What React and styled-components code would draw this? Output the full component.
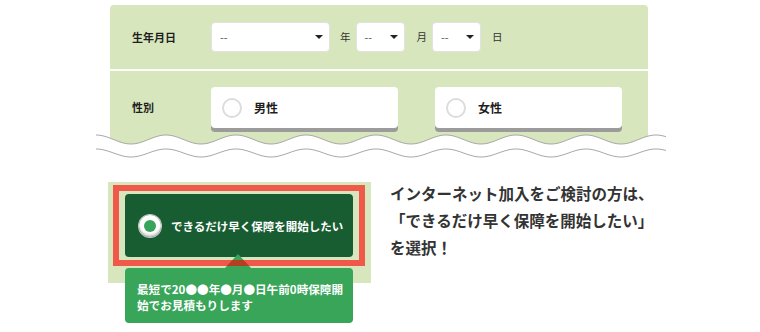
import React from "react";
import styled, { createGlobalStyle } from "styled-components";

const Global = createGlobalStyle`
  html, body { margin: 0; padding: 0; background: #fff; }
  body { font-family: "Noto Sans CJK JP", "Noto Sans", sans-serif; color: #222; }
  * { box-sizing: border-box; }
`;

const Page = styled.div`
  width: 760px;
  height: 332px;
  padding-top: 5px;
  overflow: hidden;
`;

const Panel = styled.div`
  margin-left: 110px;
  width: 538px;
  background: #d8e6bd;
  border-radius: 4px 4px 0 0;
`;

const Row = styled.div`
  display: flex;
  align-items: ${(p) => (p.$top ? "flex-start" : "center")};
  height: ${(p) => p.$h}px;
  padding-top: ${(p) => p.$pt || 0}px;
  border-bottom: ${(p) => (p.$sep ? "2px solid #fff" : "none")};
`;

const Label = styled.div`
  width: 101px;
  padding-left: 22px;
  font-size: 11px;
  font-weight: 700;
  line-height: 1;
  color: #1e1e1e;
  ${(p) => p.$top && "margin-top: 15px;"}
`;

const Group = styled.div`
  display: flex;
  align-items: center;
`;

const Select = styled.div`
  position: relative;
  width: ${(p) => p.$w}px;
  height: 30px;
  background: #fff;
  border: 1px solid #e2e2e2;
  border-radius: 4px;
  display: flex;
  align-items: center;
  padding-left: 8px;
  font-size: 11px;
  color: #555;
  &::after {
    content: "";
    position: absolute;
    right: 6px;
    top: 12px;
    border-left: 4px solid transparent;
    border-right: 4px solid transparent;
    border-top: 4px solid #222;
  }
`;

const Unit = styled.span`
  font-size: 10.5px;
  color: #333;
  margin: 0 ${(p) => p.$r}px 0 ${(p) => p.$l}px;
  line-height: 1;
`;

const Cards = styled.div`
  display: flex;
  gap: 37px;
`;

const Card = styled.div`
  width: 187px;
  height: 41px;
  background: #fff;
  border-radius: 4px;
  box-shadow: 0 4px 0 #9b9b9b;
  display: flex;
  align-items: center;
  padding-left: ${(p) => p.$pl}px;
  gap: 12px;
  font-size: 12px;
  font-weight: 700;
  color: #1e1e1e;
`;

const Circle = styled.span`
  width: 20px;
  height: 20px;
  border-radius: 50%;
  border: 2px solid #dcdcdc;
  background: #fff;
`;

const WaveSvg = styled.svg`
  display: block;
  margin: -15px 0 0 96px;
`;

const Lower = styled.div`
  display: flex;
  align-items: flex-start;
  margin: 21px 0 0 108px;
`;

const Box = styled.div`
  position: relative;
  width: 263px;
  height: 101px;
  background: #d8e6bd;
  padding: 12px 18px 26px 17px;
`;

const ChoiceButton = styled.div`
  width: 228px;
  height: 63px;
  background: #185d31;
  border-radius: 4px;
  display: flex;
  align-items: center;
  padding-left: 14px;
  gap: 10px;
  color: #fff;
  font-size: 11.5px;
  font-weight: 700;
  white-space: nowrap;
`;

const Radio = styled.span`
  width: 22px;
  height: 22px;
  border-radius: 50%;
  background: radial-gradient(circle at 50% 35%, #ffffff 55%, #d6d6d6 100%);
  box-shadow: inset 0 -2px 2px rgba(0, 0, 0, 0.15), 0 0 0 1px #c9c9c9;
  display: flex;
  align-items: center;
  justify-content: center;
  &::after {
    content: "";
    width: 12px;
    height: 12px;
    border-radius: 50%;
    background: #38a35a;
  }
`;

const Frame = styled.div`
  position: absolute;
  top: 3px;
  left: 5px;
  right: 6px;
  bottom: 17px;
  border: 6px solid rgba(255, 0, 2, 0.62);
  z-index: 3;
  pointer-events: none;
`;

const Tooltip = styled.div`
  position: absolute;
  top: 86px;
  left: 17px;
  width: 228px;
  height: 55px;
  background: #38a559;
  border-radius: 4px;
  padding: 13px 8px 0 12px;
  color: #fff;
  font-size: 11.6px;
  font-weight: 700;
  line-height: 16px;
  z-index: 2;
  white-space: nowrap;
  &::before {
    content: "";
    position: absolute;
    top: -14px;
    left: 100px;
    border-left: 13px solid transparent;
    border-right: 13px solid transparent;
    border-bottom: 14px solid #38a559;
  }
`;

const Note = styled.p`
  margin: -2px 0 0 19px;
  font-size: 15.5px;
  font-weight: 700;
  line-height: 27px;
  color: #333;
  white-space: nowrap;
`;

function wave(mid, amp, period, width) {
  let d = "";
  for (let x = 0; x <= width; x += 2) {
    const y = mid - amp * Math.cos((2 * Math.PI * x) / period);
    d += (x === 0 ? "M" : "L") + x + " " + y.toFixed(2) + " ";
  }
  return d;
}

function Wave() {
  const W = 570;
  const top = wave(8.5, 4.5, 70, W);
  const bottom = wave(22, 4, 70, W);
  return (
    <WaveSvg width={W} height="30" viewBox={`0 0 ${W} 30`}>
      <path d={`${top} L${W} 30 L0 30 Z`} fill="#fff" />
      <path d={top} fill="none" stroke="#a9a9a9" strokeWidth="1" />
      <path d={bottom} fill="none" stroke="#a9a9a9" strokeWidth="1" />
    </WaveSvg>
  );
}

export default function App() {
  return (
    <Page>
      <Global />
      <Panel>
        <Row $h={66} $sep>
          <Label>生年月日</Label>
          <Group>
            <Select $w={119}>--</Select>
            <Unit $l={10} $r={5}>年</Unit>
            <Select $w={49}>--</Select>
            <Unit $l={12} $r={5}>月</Unit>
            <Select $w={49}>--</Select>
            <Unit $l={11} $r={0}>日</Unit>
          </Group>
        </Row>
        <Row $h={75} $pt={16} $top>
          <Label $top>性別</Label>
          <Cards>
            <Card $pl={11}>
              <Circle />
              男性
            </Card>
            <Card $pl={11}>
              <Circle />
              女性
            </Card>
          </Cards>
        </Row>
      </Panel>
      <Wave />
      <Lower>
        <Box>
          <ChoiceButton>
            <Radio />
            できるだけ早く保障を開始したい
          </ChoiceButton>
          <Tooltip>
            最短で20●●年●月●日午前0時保障開
            <br />
            始でお見積もりします
          </Tooltip>
          <Frame />
        </Box>
        <Note>
          インターネット加入をご検討の方は、
          <br />
          「できるだけ早く保障を開始したい」
          <br />
          を選択！
        </Note>
      </Lower>
    </Page>
  );
}
